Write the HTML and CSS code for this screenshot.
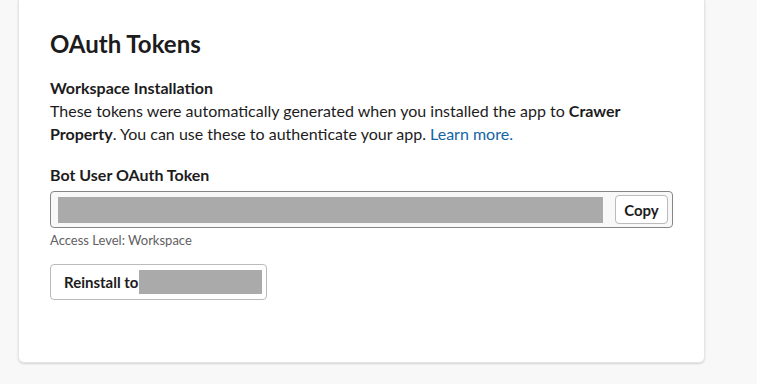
FILE: index.html
```html
<!DOCTYPE html>
<html lang="en">
<head>
    <meta charset="UTF-8">
    <title>OAuth Tokens</title>
    <link rel="stylesheet" href="styles.css">
</head>
<body>
    <div class="page">
        <div class="card">
            <h2>OAuth Tokens</h2>

            <div class="section">
                <h4>Workspace Installation</h4>
                <p>These tokens were automatically generated when you installed the app to <strong>Crawer Property</strong>. You can use these to authenticate your app. <a href="#">Learn more.</a></p>
            </div>

            <div class="token">
                <label>Bot User OAuth Token</label>
                <div class="token-field">
                    <span class="redacted redacted-token"></span>
                    <button class="btn btn-copy">Copy</button>
                </div>
                <div class="hint">Access Level: Workspace</div>
            </div>

            <button class="btn btn-reinstall">Reinstall to<span class="redacted redacted-name"></span></button>
        </div>
    </div>
</body>
</html>
```

FILE: styles.css
```css
* {
    margin: 0;
    padding: 0;
    box-sizing: border-box;
}

body {
    font-family: Lato, 'Noto Sans', sans-serif;
    background: #f8f8f8;
    color: #1d1c1d;
}

.page {
    padding: 0 52px 21px 18px;
}

.card {
    background: #fff;
    border-radius: 0 0 6px 6px;
    box-shadow: 0 1px 2px rgba(0, 0, 0, 0.15);
    border: 1px solid #e6e6e6;
    border-top: none;
    padding: 29px 32px 0 31px;
    height: 363px;
}

h2 {
    font-size: 24px;
    font-weight: 700;
    line-height: 30px;
    margin-bottom: 18px;
}

.section h4 {
    font-size: 16px;
    font-weight: 700;
    line-height: 22px;
}

.section p {
    font-size: 16px;
    line-height: 23px;
    padding-right: 20px;
}

.section a {
    color: #1264a3;
    text-decoration: none;
}

.token {
    margin-top: 19px;
}

.token label {
    display: block;
    font-size: 16px;
    font-weight: 700;
    line-height: 22px;
    margin-bottom: 5px;
}

.token-field {
    display: flex;
    align-items: center;
    justify-content: space-between;
    width: 623px;
    height: 37px;
    padding: 0 4px 0 7px;
    background: #f8f8f8;
    border: 1px solid #868686;
    border-radius: 4px;
}

.redacted {
    display: inline-block;
    background: #aaaaaa;
}

.redacted-token {
    width: 545px;
    height: 26px;
}

.btn {
    font-family: inherit;
    font-weight: 700;
    color: #1d1c1d;
    background: #fff;
    border: 1px solid #bbbbbb;
    border-radius: 4px;
    cursor: pointer;
}

.btn-copy {
    width: 53px;
    height: 29px;
    font-size: 15px;
}

.hint {
    font-size: 13px;
    color: #616061;
    line-height: 16px;
    margin-top: 4px;
}

.btn-reinstall {
    display: flex;
    align-items: center;
    margin-top: 16px;
    width: 217px;
    height: 36px;
    padding: 0 2px 0 13px;
    font-size: 15px;
}

.redacted-name {
    width: 123px;
    height: 24px;
    margin-left: 1px;
}
```
